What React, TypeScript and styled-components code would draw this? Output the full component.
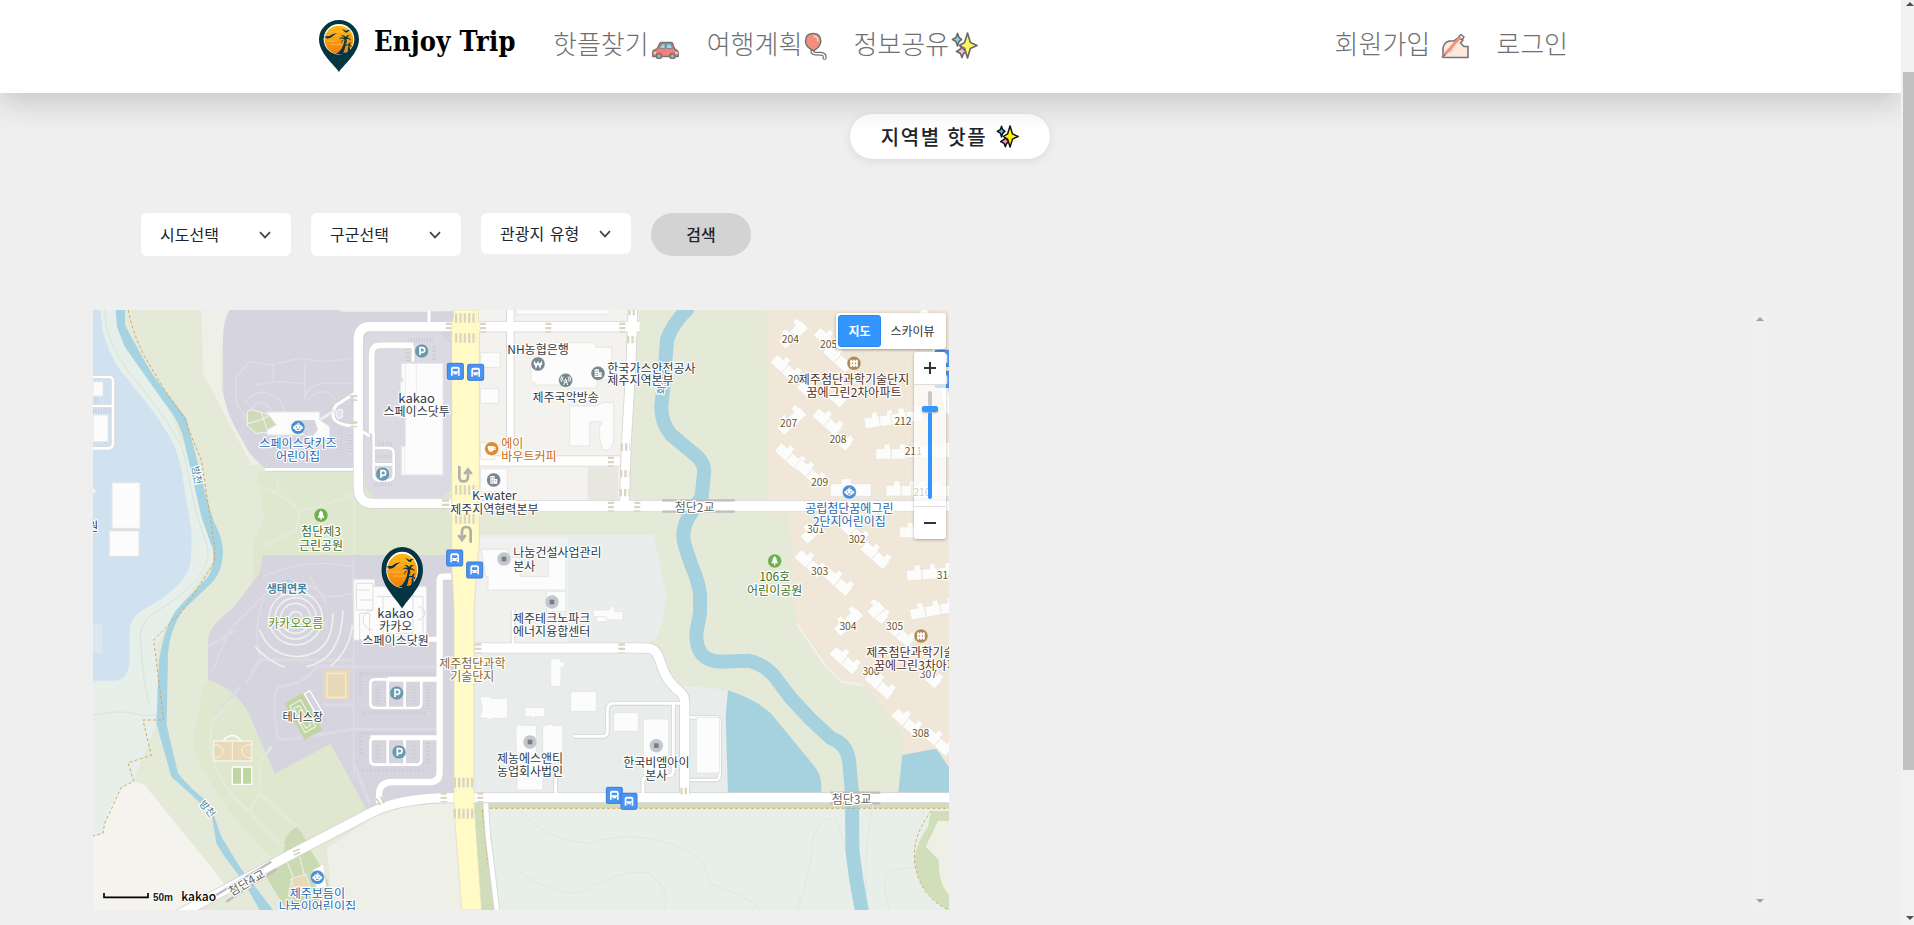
import React from "react";
import styled, { createGlobalStyle } from "styled-components";

const KR = `"Noto Sans CJK KR", "Noto Sans", sans-serif`;

const GlobalStyle = createGlobalStyle`
  *, *::before, *::after { box-sizing: border-box; }
  html, body { margin: 0; height: 100%; overflow: hidden; }
  body { background: #efefef; color: #212529; font-family: ${KR}; font-size: 16px; }
  a { color: inherit; text-decoration: none; }
  svg { display: block; }
`;

const Shell = styled.div`
  display: flex;
  width: 100vw;
  height: 100vh;
  min-height: 925px;
  overflow: hidden;
`;

const Page = styled.div`
  flex: 1;
  min-width: 0;
  display: flex;
  flex-direction: column;
  overflow: hidden;
`;

const Header = styled.header`
  position: relative;
  z-index: 2;
  display: flex;
  align-items: flex-start;
  height: 93px;
  flex: none;
  padding: 0 333px 0 319px;
  background: #fff;
  box-shadow: 0 10px 28px rgba(0, 0, 0, 0.17);
`;

const Brand = styled.a`
  display: flex;
  align-items: flex-start;
  width: 234px;
  color: #000;
  padding-top: 20px;
`;

const BrandName = styled.span`
  margin: 4px 0 0 15px;
  font: bold 27px/36px "DejaVu Serif Condensed", "DejaVu Serif", serif;
  font-stretch: condensed;
  letter-spacing: 0.3px;
  white-space: nowrap;
`;

const Nav = styled.nav<{ $end?: boolean }>`
  display: flex;
  margin-left: ${(p) => (p.$end ? "auto" : 0)};
  padding-top: 26px;
  color: #6f6f6f;
  font-size: 26px;
  font-weight: 300;
  line-height: 34px;
`;

const NavLink = styled.a<{ $gap: number; $space?: number }>`
  display: flex;
  margin-right: ${(p) => p.$gap}px;
  white-space: nowrap;

  svg {
    margin: 6px 0 0 ${(p) => p.$space ?? 3}px;
    opacity: 0.62;
  }
`;

const TitlePill = styled.h1`
  display: flex;
  align-items: center;
  justify-content: center;
  gap: 9px;
  width: 200px;
  height: 45px;
  margin: 21px 0 0 850px;
  border-radius: 23px;
  background: #fff;
  box-shadow: 0 2px 10px rgba(0, 0, 0, 0.09);
  font-size: 20px;
  font-weight: 500;
  letter-spacing: 1.7px;
  white-space: nowrap;
`;

const Filters = styled.form`
  display: flex;
  align-items: flex-start;
  gap: 20px;
  margin: 54px 0 0 141px;
`;

const Select = styled.button<{ $height: number }>`
  display: flex;
  align-items: center;
  justify-content: space-between;
  width: 150px;
  height: ${(p) => p.$height}px;
  padding: 0 20px 2px 19px;
  border: 0;
  border-radius: 6px;
  background: #fff;
  color: #212529;
  font: 16px ${KR};
  word-spacing: 2px;
  white-space: nowrap;

  svg {
    margin-top: 2px;
  }
`;

const SearchButton = styled.button`
  width: 100px;
  height: 43px;
  padding: 0 0 2px;
  border: 0;
  border-radius: 22px;
  background: #d3d3d3;
  color: #212529;
  font: 500 16px ${KR};
`;

const Results = styled.main`
  display: flex;
  justify-content: space-between;
  margin: 54px 133px 0 93px;
`;

const MapBox = styled.section`
  position: relative;
  width: 856px;
  height: 600px;
  overflow: hidden;
  background: #e4e9d8;
`;

const MapTypes = styled.div`
  position: absolute;
  top: 3px;
  right: 3px;
  display: flex;
  width: 110px;
  height: 36px;
  padding: 2px;
  border-radius: 3px;
  background: #fff;
  box-shadow: 0 1px 3px rgba(0, 0, 0, 0.35);
`;

const MapType = styled.button<{ $active?: boolean }>`
  flex: ${(p) => (p.$active ? "0 0 43px" : "1")};
  padding: 0 0 1px;
  border: ${(p) => (p.$active ? "1px solid #2a86ea" : "0")};
  border-radius: 3px;
  background: ${(p) => (p.$active ? "#3396ff" : "#fff")};
  color: ${(p) => (p.$active ? "#fff" : "#333")};
  font: ${(p) => (p.$active ? 700 : 400)} 12px ${KR};
`;

const ZoomControl = styled.div`
  position: absolute;
  top: 42px;
  right: 3px;
  display: flex;
  flex-direction: column;
  width: 32px;
  height: 187px;
  border-radius: 3px;
  box-shadow: 0 1px 3px rgba(0, 0, 0, 0.3);
  overflow: hidden;
`;

const ZoomButton = styled.button`
  display: flex;
  align-items: center;
  justify-content: center;
  height: 32px;
  flex: none;
  padding: 0;
  border: 0;
  background: #fff;
`;

const ZoomTrack = styled.div`
  flex: 1;
  display: flex;
  flex-direction: column;
  align-items: center;
  padding: 6px 0 7px;
  border: solid #ddd;
  border-width: 1px 0;
  background: rgba(255, 255, 255, 0.7);
`;

const TrackPart = styled.div<{ $on?: boolean }>`
  width: 4px;
  height: ${(p) => (p.$on ? "auto" : "15px")};
  flex: ${(p) => (p.$on ? "1" : "none")};
  border-radius: 2px;
  background: ${(p) => (p.$on ? "#3396ff" : "#c8c8c8")};
`;

const TrackHandle = styled.div`
  width: 16px;
  height: 6px;
  flex: none;
  border-radius: 2px;
  background: #3396ff;
  box-shadow: 0 1px 2px rgba(0, 0, 0, 0.3);
`;

const ScrollRail = styled.div<{ $page?: boolean }>`
  display: flex;
  flex-direction: column;
  align-items: flex-end;
  justify-content: space-between;
  flex: none;
  width: ${(p) => (p.$page ? 13 : 17)}px;
  padding: ${(p) => (p.$page ? "2px 0 5px" : "7px 4px")};
  background: ${(p) => (p.$page ? "#f1f1f1" : "#f0f0f0")};
`;

const ScrollThumb = styled.div`
  width: 11px;
  height: 698px;
  margin: 66px 0 auto;
  background: #c1c1c1;
`;

const Arrow = ({ down, color }: { down?: boolean; color: string }) => (
  <svg width="8" height="4" viewBox="0 0 8 4">
    <path d={down ? "M0 0H8L4 4z" : "M0 4H8L4 0z"} fill={color} />
  </svg>
);

const Chevron = () => (
  <svg width="12" height="8" viewBox="0 0 12 8" fill="none" stroke="#444" strokeWidth="1.7">
    <path d="M1 1.2 6 6.4 11 1.2" />
  </svg>
);

const PinIcon = ({ width, height }: { width: number; height: number }) => (
  <svg width={width} height={height} viewBox="0 0 120 157" preserveAspectRatio="none">
    <PinArt />
  </svg>
);

const PinArt = () => (
  <>
    <defs>
      <linearGradient id="dusk" x1="0" y1="0" x2="0" y2="1">
        <stop offset="0" stopColor="#fdb913" />
        <stop offset="0.5" stopColor="#fb9c12" />
        <stop offset="1" stopColor="#f47b0c" />
      </linearGradient>
    </defs>
    <path d="M60 157C48 137 0 101 0 58A60 58 0 0 1 120 58C120 101 72 137 60 157Z" fill="#043642" />
    <circle cx="60" cy="58" r="46" fill="#fff" />
    <circle cx="60" cy="60" r="43" fill="url(#dusk)" />
    <path d="M32 36H98M24 46H80M34 74H70M24 64H54" stroke="#ffcf6b" strokeWidth="2" opacity="0.7" />
    <path d="M12 51q12-3 19-3q11-8 24-9q-11 6-17 12q-8 6-17 4q4-3-9-4zM68 28q8 1 12 5q6-4 14-2q-8 2-9 7q-9 0-10-4q-3-4-7-6z" fill="#043642" />
    <path d="M51 101q20-6 26-42l4 1q-1 24-8 39l12-1q4-11 2-18l4-1q4 10 2 19q-9 12-42 3z" fill="#043642" />
    <path d="M77 59q-9-7-17 0q5-11 16-5q-4-7-11-6q10-5 15 3q5-8 14-4q-7 1-10 7q10-1 12 8q-7-6-14-4q4 8-1 13q0-9-5-12q-7 3-9 12q-3-10 10-12zM89 77q-8-3-13 4q1-10 12-7q2-8 10-6q-5 2-6 7q7 2 6 9q-4-6-8-5z" fill="#043642" />
  </>
);

const Sparkles = ({ size }: { size: number }) => (
  <svg width={size} height={size} viewBox="0 0 27 27" stroke="#111" strokeWidth="1.7" strokeLinejoin="round">
    <path d="M5 5.500 6.500 1.500 8 5.500 10.500 7.500 8 9.500 6.500 14 5 9.500 1.500 7.500z" fill="#35c5f0" />
    <path d="M9.500 17 11 14 12.500 17 15.500 19.500 12.500 21.500 11 25.500 9.500 21.500 5.500 19.500z" fill="#f692c0" />
    <path d="M13.600 10.500 16.500 1 19.400 10.500 26 13.500 19.400 16.500 16.500 26 13.600 16.500 8.500 13.500z" fill="#fff100" />
  </svg>
);

const Car = () => (
  <svg width="27" height="27" viewBox="0 0 27 27" strokeLinejoin="round">
    <g transform="translate(0 2)">
      <path d="M5 15 8 9.200Q8.500 8.400 9.500 8.400H19Q20 8.400 20.500 9.200L22.500 15 25 16.500Q26.300 17.500 26.200 19V22.500H.8V18Q1 16 5 15Z" fill="#e8352b" stroke="#222" strokeWidth="1.500" />
      <path d="M7.500 14.500 9.800 10H13V14.500zM14.500 10H18.600L20.500 14.500H14.500z" fill="#42cdf4" stroke="#222" strokeWidth=".7" />
      <path d="M1.500 19H4M23 19H26" stroke="#ffd34d" strokeWidth="1.500" />
      <circle cx="7" cy="22" r="2.600" fill="#777" stroke="#222" strokeWidth="1.500" />
      <circle cx="20.500" cy="22" r="2.600" fill="#777" stroke="#222" strokeWidth="1.500" />
    </g>
  </svg>
);

const Balloon = () => (
  <svg width="23" height="28" viewBox="0 0 23 28" fill="none" strokeLinecap="round">
    <path d="M9 17.500Q7 21 11 21.500L17 21.800Q21.500 22 20.500 26" stroke="#222" strokeWidth="4" />
    <path d="M9 17.500Q7 21 11 21.500L17 21.800Q21.500 22 20.500 26.500" stroke="#fff" strokeWidth="1.500" />
    <path d="M9 1.500Q16.500 1.500 16.800 9Q16.500 15 9.500 18.800Q1.500 15 1.500 9Q1.800 1.500 9 1.500Z" fill="#f04a32" stroke="#222" strokeWidth="1.500" />
    <path d="M10 4Q14 4.500 14 9" stroke="#ffb3a2" strokeWidth="1.500" />
  </svg>
);

const WritingHand = () => (
  <svg width="28" height="27" viewBox="0 0 28 27" strokeLinejoin="round">
    <path d="M2 25.500V19Q1.500 14 5 10.500L8 9H13L17 6 22 8 19.500 11 23 14.500H27V25.500Z" fill="#fbdccb" stroke="#222" strokeWidth="1.600" />
    <path d="M6 17H14L9 21z" fill="#cfae90" />
    <path d="M1.500 25 19.500 5" stroke="#f04a32" strokeWidth="2.800" />
    <path d="M1 25.500 4 22.500M17.500 5 20 2.500 23 5 20.500 8" fill="none" stroke="#222" strokeWidth="1.600" />
  </svg>
);

/* The map canvas uses three units per pixel. */
type LabelProps = { x: number; y: number; t: string; c?: string; s?: number; a?: "start" | "middle"; w?: number; r?: number };

const Label = ({ x, y, t, c = "#2f3a45", s = 36, a = "middle", w = 400, r = 0 }: LabelProps) => (
  <text
    x={x}
    y={y + s * 0.36 + 2}
    fill={c}
    fontSize={s}
    fontWeight={w}
    textAnchor={a}
    stroke="#fff"
    strokeWidth="7"
    strokeLinejoin="round"
    paintOrder="stroke"
    transform={r ? `rotate(${r} ${x} ${y})` : undefined}
  >
    {t}
  </text>
);

const BLUE = "#1f68b3";
const GREEN = "#38701f";
const BROWN = "#4f3024";
const OLIVE = "#6b5426";
const ORANGE = "#c96a0c";

const labels: LabelProps[] = [
  { x: 971, y: 262, t: "kakao", s: 39 },
  { x: 971, y: 303, t: "스페이스닷투" },
  { x: 615, y: 398, t: "스페이스닷키즈", c: BLUE },
  { x: 615, y: 438, t: "어린이집", c: BLUE },
  { x: 684, y: 663, t: "첨단제3", c: GREEN },
  { x: 684, y: 704, t: "근린공원", c: GREEN },
  { x: 582, y: 836, t: "생태연못", c: "#3b84a4", s: 33, w: 700 },
  { x: 314, y: 495, t: "방천", c: "#3b7f99", s: 30, r: 80 },
  { x: 345, y: 1495, t: "방천", c: "#3b7f99", s: 30, r: 50 },
  { x: -17, y: 647, t: "원", a: "start" },
  { x: 1204, y: 555, t: "K-water", s: 37 },
  { x: 1204, y: 597, t: "제주지역협력본부" },
  { x: 1225, y: 398, t: "에이", c: ORANGE, a: "start" },
  { x: 1225, y: 437, t: "바우트커피", c: ORANGE, a: "start" },
  { x: 1335, y: 116, t: "NH농협은행" },
  { x: 1704, y: 226, t: "화천", c: "#3b84a4", s: 30, r: -85 },
  { x: 1543, y: 173, t: "한국가스안전공사", a: "start" },
  { x: 1543, y: 211, t: "제주지역본부", a: "start" },
  { x: 1418, y: 260, t: "제주국악방송" },
  { x: 1805, y: 590, t: "첨단2교", c: "#666" },
  { x: 2092, y: 85, t: "204", c: OLIVE, s: 31 },
  { x: 2207, y: 101, t: "205", c: OLIVE, s: 31 },
  { x: 2110, y: 207, t: "206", c: OLIVE, s: 31 },
  { x: 2087, y: 337, t: "207", c: OLIVE, s: 31 },
  { x: 2235, y: 385, t: "208", c: OLIVE, s: 31 },
  { x: 2180, y: 516, t: "209", c: OLIVE, s: 31 },
  { x: 2430, y: 331, t: "212", c: OLIVE, s: 31 },
  { x: 2461, y: 423, t: "211", c: OLIVE, s: 31 },
  { x: 2487, y: 546, t: "210", c: OLIVE, s: 31 },
  { x: 2168, y: 657, t: "301", c: OLIVE, s: 31 },
  { x: 2292, y: 686, t: "302", c: OLIVE, s: 31 },
  { x: 2180, y: 781, t: "303", c: OLIVE, s: 31 },
  { x: 2557, y: 795, t: "314", c: OLIVE, s: 31 },
  { x: 2265, y: 946, t: "304", c: OLIVE, s: 31 },
  { x: 2405, y: 948, t: "305", c: OLIVE, s: 31 },
  { x: 2334, y: 1083, t: "306", c: OLIVE, s: 31 },
  { x: 2506, y: 1090, t: "307", c: OLIVE, s: 31 },
  { x: 2483, y: 1269, t: "308", c: OLIVE, s: 31 },
  { x: 2283, y: 208, t: "제주첨단과학기술단지", c: BROWN },
  { x: 2283, y: 246, t: "꿈에그린2차아파트", c: BROWN },
  { x: 2320, y: 1025, t: "제주첨단과학기술단지", c: BROWN, a: "start" },
  { x: 2343, y: 1065, t: "꿈에그린3차아파트", c: BROWN, a: "start" },
  { x: 2269, y: 593, t: "공립첨단꿈에그린", c: BLUE },
  { x: 2269, y: 633, t: "2단지어린이집", c: BLUE },
  { x: 2045, y: 799, t: "106호", c: GREEN },
  { x: 2045, y: 839, t: "어린이공원", c: GREEN },
  { x: 1261, y: 727, t: "나눔건설사업관리", a: "start" },
  { x: 1261, y: 767, t: "본사", a: "start" },
  { x: 908, y: 908, t: "kakao", s: 39 },
  { x: 908, y: 948, t: "카카오" },
  { x: 908, y: 989, t: "스페이스닷원" },
  { x: 608, y: 938, t: "카카오오름", c: "#5b8f1c" },
  { x: 629, y: 1219, t: "테니스장", s: 33 },
  { x: 1138, y: 1059, t: "제주첨단과학", c: "#8b6a2c" },
  { x: 1138, y: 1098, t: "기술단지", c: "#8b6a2c" },
  { x: 1376, y: 923, t: "제주테크노파크" },
  { x: 1376, y: 963, t: "에너지융합센터" },
  { x: 1311, y: 1343, t: "제농에스앤티" },
  { x: 1311, y: 1382, t: "농업회사법인" },
  { x: 1690, y: 1355, t: "한국비엠아이" },
  { x: 1690, y: 1394, t: "본사" },
  { x: 2276, y: 1467, t: "첨단3교", c: "#666" },
  { x: 460, y: 1716, t: "첨단4교", c: "#666", r: -30 },
  { x: 673, y: 1750, t: "제주보듬이", c: BLUE },
  { x: 673, y: 1788, t: "나눔이어린이집", c: BLUE },
];

type PoiKind = "kid" | "parking" | "tree" | "cafe" | "office" | "bank" | "radio" | "apt" | "dot";

const poiColor: Record<PoiKind, string> = {
  kid: "#4a8fd6",
  parking: "#6a99ae",
  tree: "#6fb04e",
  cafe: "#e08b30",
  office: "#76868f",
  bank: "#76868f",
  radio: "#76868f",
  apt: "#ae8a56",
  dot: "#c4c8cd",
};

const poiArt: Record<PoiKind, React.ReactNode> = {
  kid: (
    <>
      <path d="M-3-9Q0-14 4-12" fill="none" stroke="#fff" strokeWidth="3" />
      <ellipse cx="0" cy="1" rx="11" ry="10" fill="#fff" />
      <circle cx="-11" cy="1" r="4" fill="#fff" />
      <circle cx="11" cy="1" r="4" fill="#fff" />
      <path d="M-5-3v4M5-3v4M-4 6h8" fill="none" stroke="#4a8fd6" strokeWidth="3" />
    </>
  ),
  parking: <path d="M-5 12V-10H2a7 7 0 0 1 0 14H-5" fill="none" stroke="#fff" strokeWidth="5" />,
  tree: <path d="M0-15 6-7V-3L10 7H2V13H-2V7H-10L-6-3V-7z" fill="#fff" />,
  cafe: <path d="M-12-8H7V-5H12V4H6Q3 10-3 10Q-12 9-12-8M7-2V2H9V-2z" fill="#fff" fillRule="evenodd" />,
  office: (
    <>
      <path d="M-10-12H3V-3H11V11H-10z" fill="#fff" />
      <path d="M-6-8v3M-1-8v3M-6-1v3M-1-1v3M-6 5v3M-1 5v3M6 1v3" stroke="#76868f" strokeWidth="3" />
    </>
  ),
  bank: <path d="M-11-8-6 9 0-5 6 9 11-8M-13 0H13" fill="none" stroke="#fff" strokeWidth="4" />,
  radio: <path d="M-6 14 0-5 6 14M-4 6H4M-7-11q-6 7 0 13M7-11q6 7 0 13M-12-12q-6 9 0 17M12-12q6 9 0 17" fill="none" stroke="#fff" strokeWidth="3" />,
  apt: <path d="M-8-11V11M0-11V11M8-11V11M-12-5H12M-12 5H12" stroke="#fff" strokeWidth="5" />,
  dot: <rect x="-7" y="-7" width="14" height="14" fill="#74818a" />,
};

const pois: [PoiKind, number, number][] = [
  ["kid", 615, 352], ["kid", 2269, 546], ["kid", 673, 1702],
  ["parking", 986, 123], ["parking", 869, 492], ["parking", 911, 1149], ["parking", 918, 1326],
  ["tree", 684, 616], ["tree", 2045, 753],
  ["cafe", 1196, 416], ["office", 1202, 510], ["office", 1515, 190], ["bank", 1335, 162], ["radio", 1418, 211],
  ["apt", 2283, 160], ["apt", 2484, 978],
  ["dot", 1233, 747], ["dot", 1377, 876], ["dot", 1311, 1296], ["dot", 1690, 1307],
];

const busStops = [[1087, 184], [1148, 187], [1085, 744], [1145, 780], [1564, 1456], [1608, 1474], [2550, 145], [2550, 208]];

/* Apartment blocks: x, y, angle, number of wings. */
const blocks: [number, number, number, number][] = [
  [2100, 73, -42, 2], [2190, 78, 42, 1], [2235, 145, 42, 2], [2078, 175, 42, 2], [2140, 235, 42, 1], [2235, 265, 42, 1],
  [2095, 332, -42, 2], [2203, 335, 42, 2], [2252, 395, 42, 1], [2090, 440, 42, 2], [2150, 488, 42, 2],
  [2360, 332, -8, 2], [2440, 320, -8, 2], [2395, 430, 0, 2], [2505, 425, 0, 3], [2425, 540, 0, 2], [2525, 540, 0, 3],
  [2165, 658, -42, 2], [2280, 665, 42, 2], [2347, 735, 42, 2], [2150, 760, 42, 2], [2235, 815, 42, 2],
  [2465, 665, 0, 2], [2510, 790, -4, 3], [2265, 935, -42, 2], [2360, 915, 42, 1], [2420, 970, 42, 2], [2348, 898, -42, 1],
  [2255, 1050, 42, 2], [2360, 1125, 42, 2], [2520, 1108, 42, 1], [2440, 1235, 42, 2], [2535, 1295, 42, 2], [2520, 900, -10, 3],
];

const buildings = [
  "M925 160H1050V495H925V410H937V325L880 312V300L923 300V215H930V205H925Z",
  "M1163 128H1222V172H1163ZM1163 236H1217V280H1163ZM1163 398H1205V448H1163ZM1163 476H1243V545H1163Z",
  "M57 518H141V655H57ZM49 663H138V739H49ZM0 215H30V258H0ZM0 315H45V395H0ZM0 530 9 545 0 552Z",
  "M520 306H680V330L710 350V385H640V375H522V360L550 345Z",
  "M1314 160 1390 98H1508V112H1556V210H1512V234H1420V225H1326V218H1314Z",
  "M1430 288H1508L1530 278H1562V395L1550 420H1530L1520 385V345H1525V335H1490V408H1430Z",
  "M1165 718H1245V742H1281V800H1366V710H1418V840H1185V800H1178Z",
  "M1360 845H1418V905H1360ZM1510 905H1550V935H1510Z",
  "M1543 900H1550V890H1565V905H1590V930H1540V920H1500V900Z",
  "M782 808H845V830H1000V1000H975V1010H960V990H782Z",
  "M1373 1046H1402V1055H1414V1072H1404V1129H1373ZM1433 1145H1510V1204H1433ZM1295 1193H1355V1220H1325V1225H1317V1220H1295Z",
  "M1160 1160H1190L1196 1165H1244V1225H1195L1190 1230L1180 1224H1160L1168 1195Z",
  "M1268 1247 1285 1242V1246H1330V1340H1350V1440H1272V1400ZM1349 1247 1380 1241V1247H1409V1342H1349Z",
  "M1562 1208H1636V1264H1562ZM1651 1227H1727V1395H1651ZM1810 1222H1880V1389H1810Z",
  "M2212 521H2245V506H2275V521H2335V559H2212Z",
  "M1271 -10H1545V13H1271Z",
];

const Block = ({ x, y, a, n }: { x: number; y: number; a: number; n: number }) => (
  <g transform={`translate(${x} ${y}) rotate(${a})`}>
    {Array.from({ length: n }, (_, i) => (
      <path key={i} d={`M${(i - n / 2) * 46}-14h24v-14h18v14h4v32h-46z`} />
    ))}
  </g>
);

const Crossing = ({ x, y, w, h, v }: { x: number; y: number; w: number; h: number; v?: boolean }) => (
  <path
    d={v ? `M${x + w / 2} ${y}V${y + h}` : `M${x} ${y}H${x + w}`}
    stroke="#dad5c2"
    strokeWidth={v ? w : h}
    strokeDasharray="7 6"
    fill="none"
  />
);

const roads: [string, number][] = [
  ["M1075 50H830Q796 50 796 90V530Q796 580 840 580H1075", 28],
  ["M515 478H780", 8],
  ["M1008 0V50", 9],
  ["M795 244 730 285Q712 310 725 330Q740 345 780 348L830 378", 9],
  ["M960 106H860Q836 106 836 135V370", 17],
  ["M960 106V155M836 370H842V495Q842 511 860 511H885Q902 511 902 495V430Q902 414 885 414H842M842 463H900", 8],
  ["M0 201H50Q60 201 60 215V400Q60 415 45 415H0M0 288H58", 8],
  ["M1115 50H1640", 29],
  ["M1252 0V440Q1255 452 1280 453H1580", 20],
  ["M1620 0 1613 180 1600 400 1594 588", 27],
  ["M1150 453H1580", 28],
  ["M1110 588H2568", 31],
  ["M2490 0 2515 50 2545 200 2568 310", 22],
  ["M1075 800H1050Q1040 800 1040 812V1385Q1040 1416 1010 1416H900Q858 1416 858 1455V1480", 19],
  ["M1000 988H1040M884 1108H1040M832 1283H1040", 15],
  ["M884 1108H845Q832 1108 832 1122V1180Q832 1194 848 1194H970Q985 1194 985 1178V1108M884 1108V1190M935 1108V1190", 8],
  ["M850 1283Q832 1283 832 1297V1350Q832 1364 848 1364H970Q985 1364 985 1348V1283M884 1283V1364M935 1283V1364", 8],
  ["M255 1815 600 1630 840 1505Q930 1463 1080 1463H2568", 28],
  ["M1145 1014H1655C1720 1014 1680 1080 1760 1145Q1775 1155 1775 1180V1463", 28],
  ["M1260 900V1014", 8],
  ["M1442 1279H1530Q1543 1279 1543 1262V1205Q1543 1180 1560 1180H1765M1741 1180V1380Q1741 1398 1725 1398H1670Q1650 1398 1650 1415V1463M1388 1380V1463", 9],
  ["M1790 1222H1870Q1880 1222 1880 1235V1395Q1880 1410 1867 1410H1790", 8],
  ["M1178 1480 1185 1580 1212 1800", 14],
];

const MapArt = () => (
  <svg width="856" height="600" viewBox="0 0 2568 1800" fontFamily={KR}>
    <rect width="2568" height="1800" fill="#e4e9d8" />

    {/* ground */}
    <path d="M0 0H75L100 90L220 280L300 480L370 740L250 900L190 1010L195 1230L110 1440L30 1570L0 1580Z" fill="#e6efe9" />
    <path d="M0 0H22Q25 100 85 185Q215 340 245 410Q265 460 270 510L295 660Q298 750 285 785Q250 845 150 900Q113 920 110 960V1050Q105 1112 65 1112H0Z" fill="#d0e2ef" />
    <path d="M0 942H28V1030H0Z" fill="#dbe8f1" />
    <path d="M35 0Q35 90 110 190Q260 370 275 440Q310 630 340 700Q355 740 330 780Q290 850 180 910Q130 950 145 1010Q150 1120 170 1185M0 1215Q80 1200 120 1210T190 1215" fill="none" stroke="#d9e3d8" strokeWidth="3" />
    <path d="M0 1577 30 1570Q40 1490 90 1430L120 1412L155 1425L370 1690L400 1730L290 1800H0Z" fill="#f4f3ee" />
    <path d="M325 0H410L385 120V240L430 350L500 465H475L330 190Z" fill="#eeefe6" />
    <path d="M410 0H735Q740 6 760 6H1000L1080 0V600H830L515 475L470 430L425 350Q390 280 390 230V90Q390 30 410 0Z" fill="#d6d4df" />
    <path d="M735-5H1080V4H750Z" fill="#eeefe6" />
    <path d="M490 485H1080V735H510L500 820L480 860V700L515 620Z" fill="#dfe8cf" />
    <path d="M510 735H1083V1463H950L820 1500L713 1302L545 1392L475 1230Q440 1140 345 1110V985Q355 940 415 900L500 790Z" fill="#d6d4df" />
    <path d="M345 1110Q440 1140 475 1230L545 1392L713 1302L820 1500L610 1610L530 1640Q390 1500 310 1340Q290 1300 320 1200Q325 1130 345 1110Z" fill="#dfe8cf" />
    <path d="M575 1620Q565 1580 610 1550Q630 1565 640 1600L690 1680Q720 1740 712 1800H580L520 1700Z" fill="#cadab2" />
    <path d="M1085 1470H920L700 1615Q710 1650 712 1800H1110Z" fill="#eeefe7" />
    <path d="M830 68H1040L1073 100V540L1050 562H845L815 530V85Z" fill="#dbdae3" />
    <path d="M1155-2H1640L1632 68L1594 570H1155Z" fill="#f3f2ee" />
    <path d="M1484 472H1576V570H1484Z" fill="#e7e7df" />
    <path d="M1155 674H1682L1720 850Q1715 930 1690 985L1655 1000H1150L1140 800Z" fill="#e9edec" />
    <path d="M1155 682H1425V1000H1145Z" fill="#f0f1ee" />
    <path d="M1143 1015H1660L1730 1120L1790 1130Q1850 1130 1905 1143L1898 1220L1905 1463H1143Z" fill="#e8edec" />
    <path d="M2020 0H2568V1375L2530 1318L2430 1335L2428 1270L2315 1123L2240 1110L2200 1050L2110 940L2100 850L2088 610H2025Z" fill="#f0e7d9" />
    <path d="M2110 940 2200 1070 2245 1115 2310 1125" fill="none" stroke="#f2f0e8" strokeWidth="7" />
    <path d="M1150 1480H2568V1800H1200L1145 1650Z" fill="#e7efe8" />
    <path d="M1145 1478H2568V1494H1190L1178 1500L1205 1800H1165L1143 1600Z" fill="#d1dcb9" />
    <path d="M1281 1500Q1350 1590 1490 1600Q1640 1550 1800 1630Q1840 1665 1850 1720Q1990 1770 2000 1800M1281 1688Q1370 1750 1460 1750Q1600 1670 1670 1690Q1740 1750 1710 1800M2110 1800Q2155 1700 2160 1580Q2190 1510 2230 1530Q2260 1600 2270 1690M2340 1480Q2310 1650 2320 1750M2390 1800Q2355 1700 2400 1680L2465 1672" fill="none" stroke="#dfe8df" strokeWidth="3" />
    <path d="M2515 1503H2568V1800Q2470 1750 2465 1640Q2475 1590 2505 1550Z" fill="#d0deba" />
    <path d="M2535 1533H2568V1755Q2535 1720 2537 1650L2498 1610Z" fill="#eef0e6" />

    {/* water */}
    <path d="M68 0H96V45Q140 130 180 195L280 325L312 450Q340 570 365 640Q392 690 390 735Q385 790 355 820L270 900Q230 960 225 1030L221 1245L255 1390Q295 1440 350 1480L385 1580L440 1670L540 1800H500L455 1720L395 1640L370 1600L355 1510L290 1450L235 1400L190 1240L198 1050Q215 950 250 900L345 800Q365 770 360 720L325 620L275 400Q265 340 215 280L95 110L72 50Z" fill="#a6d3e1" />
    <path d="M1790-10Q1735 45 1722 90L1714 200L1705 290Q1705 340 1735 375L1795 425Q1838 455 1833 490L1826 560L1782 630Q1765 665 1775 705L1795 765Q1815 810 1821 850V910L1810 970Q1808 1055 1885 1055L1965 1052Q2010 1060 2045 1100L2090 1160L2150 1225L2215 1285Q2260 1300 2268 1350L2277 1450L2278 1620L2290 1710L2308 1810" fill="none" stroke="#a6d2df" strokeWidth="42" strokeLinejoin="round" />
    <path d="M1905 1141Q2010 1175 2050 1230L2165 1370Q2190 1400 2184 1448H1905L1898 1220Z" fill="#a6d2df" />
    <path d="M2428 1335 2530 1316 2568 1372V1448H2416Z" fill="#a6d2df" />
    <path d="M106 0Q115 60 155 140L215 240L275 325L300 390L325 450L365 710V755L275 895L182 990L212 1230H150L175 1336L105 1358L122 1414L85 1432L35 1540L30 1570L0 1578M1190 1495H2568M1168 1500 1185 1665M2515 1503Q2440 1600 2475 1700Q2500 1770 2568 1800" fill="none" stroke="#d4a860" strokeWidth="3" strokeDasharray="9 7" />

    {/* garden paths and sports courts */}
    <g fill="none" stroke="#dfdee6" strokeWidth="4">
      <path d="M430 280V200L470 155L530 165L620 145L700 155L780 145M540 160V215L485 225M540 215L640 220M635 160V270Q640 215 720 220H780M430 280L470 340M455 280Q490 220 560 270L590 330M470 300Q510 250 540 310M640 275Q690 220 725 265M740 370V440M770 370V440" />
      <path d="M510 800Q640 740 780 770V870M540 840Q620 790 700 860Q740 860 780 850M600 810V860H740M650 800L700 880M510 870Q480 960 500 1040M782 740V1400M360 1080L410 960L520 850" />
      <path stroke="#dcdbe4" strokeWidth="9" d="M345 1010 430 960M460 1120 500 1050H780M440 1130 360 1230M555 1290Q530 1140 560 1130Q640 1120 670 1070H1030M555 1290 640 1280 780 1258H1030M690 1185H780M782 1360 830 1480" />
      <path stroke="#e3ead9" strokeWidth="8" d="M420 1165 360 1230Q320 1380 475 1510Q520 1570 575 1610M500 1440V1360L535 1310M470 1500 500 1450L610 1550M490 530Q560 540 620 600Q700 590 780 550M555 500V545M620 600 610 660 510 710M784 500V730" />
    </g>
    <g fill="none" stroke="#f0f0ee" strokeWidth="5">
      <circle cx="608" cy="925" r="20" />
      <circle cx="608" cy="925" r="45" />
      <circle cx="608" cy="925" r="62" />
      <circle cx="608" cy="925" r="80" />
      <path d="M500 960Q530 1040 620 1040Q720 1030 720 910M487 1010Q520 1050 575 1072M640 1070Q745 1050 750 900M712 1070Q770 1020 778 945" />
    </g>
    <path d="M463 305 475 299 530 315 578 343 570 362 490 370 463 348Z" fill="#cfdbb8" stroke="#f5f5f2" strokeWidth="3" />
    <path d="M465 340Q510 330 530 315M505 310L525 365" stroke="#e9eddf" strokeWidth="4" fill="none" />
    <path d="M570 815Q590 800 610 825Q595 840 570 850Z" fill="#a9d5e5" />
    <path d="M690 1080H770V1170H690Z" fill="#e8d9b8" />
    <path d="M702 1090H758V1162H702Z" fill="none" stroke="#f6efdf" strokeWidth="3" />
    <path d="M574 1180 630 1148 688 1260 635 1289Z" fill="#bfd5a2" />
    <path d="M590 1188 623 1170 668 1250 636 1268ZM602 1196 619 1187 653 1245 639 1254Z" fill="none" stroke="#e9f0dc" strokeWidth="4" />
    <path d="M634 1152 650 1142 688 1205 670 1213Z" fill="none" stroke="#fff" strokeWidth="4" />
    <path d="M390 1293Q418 1260 446 1293" fill="none" stroke="#fff" strokeWidth="4" />
    <path d="M362 1293H476V1353H362Z" fill="#e8d9b8" stroke="#f6f3ea" strokeWidth="4" />
    <path d="M418 1293V1353M364 1304Q390 1305 390 1323T364 1344M474 1304Q446 1305 446 1323T474 1344" fill="none" stroke="#faf4e7" strokeWidth="3" />
    <path d="M418 1371H476V1423H418Z" fill="#bfd5a2" stroke="#fff" strokeWidth="4" />
    <path d="M447 1371V1423" stroke="#fff" strokeWidth="6" />
    <path d="M592 1708 640 1692 655 1750H610Z" fill="#e8d9b8" stroke="#f6efdf" strokeWidth="3" />
    <path d="M580 1650 600 1700 585 1760M620 1640 635 1700" stroke="#e9eddf" strokeWidth="4" fill="none" />
    <path d="M660 1680 690 1664 700 1730 670 1735Z" fill="#fdfdfd" />

    {/* parking bays */}
    <g fill="none" stroke="#c5c4cc" strokeWidth="12" strokeDasharray="2 6">
      <path d="M947 90H1020M1023 108V155M945 110V155M855 402H902M845 524H902M850 440H895M740 362V440M770 375V430M805 1092H1025M803 1090V1155M810 1208H1000M1004 1130V1195M808 1270H1025M803 1270V1335M806 1381H995M1004 1300V1362M855 1130V1180M910 1130V1180M962 1130V1180M855 1305V1350M910 1305V1350M962 1305V1350M5 270H15M35 350V402M0 304H50" />
    </g>

    {/* roads */}
    <g fill="none" stroke="#d5d5d7">
      {roads.map(([d, w]) => <path key={d} d={d} strokeWidth={w + 5} />)}
    </g>
    <g fill="none" stroke="#fff">
      {roads.map(([d, w]) => <path key={d} d={d} strokeWidth={w} />)}
    </g>
    <path d="M737 298Q722 310 735 326L748 322V300Z" fill="#e3e2e9" stroke="#fff" strokeWidth="3" />
    <path d="M680 330 728 300" stroke="#eeeef2" strokeWidth="9" />
    <path d="M1083 0 1076 80V760L1083 900V1500L1106 1800H1166L1143 1480V900L1152 770L1159 700V60L1155 0Z" fill="#fffac6" stroke="#dcd8c4" strokeWidth="2" />
    <path d="M1082 1448H1144V1479H1082ZM1076 36H1160V66H1076Z" fill="#fffac6" />
    <g>
      {[24, 84, 540, 627].map((y) => <Crossing key={y} x={1086} y={y} w={66} h={29} />)}
      {[1418, 1511].map((y) => <Crossing key={y} x={1082} y={y} w={60} h={29} />)}
      <Crossing x={1058} y={38} w={18} h={30} v />
      <Crossing x={1161} y={38} w={18} h={30} v />
      <Crossing x={1357} y={38} w={18} h={30} v />
      <Crossing x={1579} y={38} w={18} h={30} v />
      <Crossing x={1545} y={440} w={18} h={30} v />
      <Crossing x={1545} y={575} w={18} h={30} v />
      <Crossing x={1624} y={575} w={18} h={30} v />
      <Crossing x={1047} y={568} w={22} h={28} v />
      <Crossing x={1145} y={1000} w={20} h={28} v />
      <Crossing x={1576} y={1000} w={20} h={28} v />
      <Crossing x={1043} y={1447} w={18} h={30} v />
      <Crossing x={1153} y={1447} w={18} h={30} v />
      <Crossing x={1606} y={5} w={28} h={22} />
      <Crossing x={1602} y={89} w={28} h={22} />
      <Crossing x={1583} y={411} w={28} h={22} />
      <Crossing x={1581} y={491} w={28} h={22} />
      <Crossing x={1580} y={548} w={28} h={22} />
      <Crossing x={1762} y={1443} w={28} h={20} />
      <Crossing x={771} y={255} w={22} h={18} v />
      <Crossing x={771} y={334} w={22} h={18} v />
    </g>
    <path d="M850 1465 862 1485M862 1460 874 1480M600 1625 620 1617M602 1635 622 1627" stroke="#d8d3bd" strokeWidth="5" />
    <path d="M1708 571H1925M1708 605H1925M2212 1448H2362M2212 1480H2362M370 1755 535 1655M400 1775 550 1678" stroke="#bdbdbd" strokeWidth="7" />
    <g fill="none" stroke="#b0afac" strokeWidth="8">
      <path d="M1099 468V500Q1099 514 1111 514Q1125 514 1125 500V484M1114 492 1125 478 1136 492M1133 698V665Q1133 651 1119 651Q1107 651 1107 665V684M1096 675 1107 690 1118 675" />
    </g>

    {/* buildings */}
    <g fill="#fcfcfc" stroke="#e6e6e5" strokeWidth="3">
      {buildings.map((d) => <path key={d} d={d} />)}
    </g>
    <path d="M937 162V325M970 162V300M925 410H935V495" stroke="#ececef" strokeWidth="3" fill="none" />
    <path d="M590 345 625 330H665L675 360 660 377H640Z" fill="#d6d4df" />
    <g fill="none" stroke="#dddde0" strokeWidth="3">
      <path d="M790 820H840V900H790ZM800 910H830V990H800ZM850 860H990V980H850M790 840H830M800 870H840M960 840V980M975 890A20 20 0 0 1 975 930M840 900A30 30 0 0 0 840 960M880 970H960M870 860V990" />
    </g>
    <g fill="#fcfcfa" stroke="#e6e2da" strokeWidth="2">
      {blocks.map(([x, y, a, n]) => <Block key={`${x}-${y}`} x={x} y={y} a={a} n={n} />)}
    </g>

    {/* markers and captions */}
    {busStops.map(([x, y]) => (
      <g key={`${x}-${y}`} transform={`translate(${x} ${y})`}>
        <rect x="-24" y="-24" width="48" height="48" rx="4" fill="#4893f3" stroke="#3b7cd6" strokeWidth="3" />
        <path d="M-13 13V-8Q-13-14-6-14H6Q13-14 13-8V13H8V9H-8V13ZM-8-8V0H8V-8ZM-9 4V7H-5V4ZM5 4V7H9V4Z" fill="#fff" fillRule="evenodd" />
      </g>
    ))}
    {pois.map(([k, x, y]) => (
      <g key={`${x}-${y}`} transform={`translate(${x} ${y})`}>
        <circle r="21" fill={poiColor[k]} stroke="#fff" strokeOpacity="0.6" strokeWidth="2" />
        {poiArt[k]}
      </g>
    ))}
    {labels.map((l) => <Label key={`${l.x}-${l.y}`} {...l} />)}
    <svg x="865" y="711" width="125" height="185" viewBox="0 0 120 157" preserveAspectRatio="none">
      <PinArt />
    </svg>
    <path d="M33 1749V1762H165V1749" fill="none" stroke="#000" strokeWidth="5" />
    <text x="180" y="1774" fontSize="30" fontWeight="700" fill="#222" fontFamily="Liberation Sans, sans-serif" stroke="#fff" strokeWidth="4" paintOrder="stroke">50m</text>
    <text x="265" y="1772" fontSize="36" fontWeight="500" fill="#000" stroke="#fff" strokeWidth="4" paintOrder="stroke">kakao</text>
  </svg>
);

export default function App() {
  return (
    <>
      <GlobalStyle />
      <Shell>
        <Page>
          <Header>
            <Brand href="#">
              <PinIcon width={40} height={52} />
              <BrandName>Enjoy Trip</BrandName>
            </Brand>
            <Nav>
              <NavLink href="#" $gap={28}>핫플찾기<Car /></NavLink>
              <NavLink href="#" $gap={26} $space={2}>여행계획<Balloon /></NavLink>
              <NavLink href="#" $gap={0} $space={2}>정보공유<Sparkles size={27} /></NavLink>
            </Nav>
            <Nav $end>
              <NavLink href="#" $gap={27} $space={11}>회원가입<WritingHand /></NavLink>
              <NavLink href="#" $gap={0}>로그인</NavLink>
            </Nav>
          </Header>
          <TitlePill>지역별 핫플<Sparkles size={23} /></TitlePill>
          <Filters onSubmit={(e) => e.preventDefault()}>
            <Select type="button" $height={43}>시도선택<Chevron /></Select>
            <Select type="button" $height={43}>구군선택<Chevron /></Select>
            <Select type="button" $height={41}>관광지 유형<Chevron /></Select>
            <SearchButton>검색</SearchButton>
          </Filters>
          <Results>
            <MapBox>
              <MapArt />
              <MapTypes>
                <MapType $active>지도</MapType>
                <MapType>스카이뷰</MapType>
              </MapTypes>
              <ZoomControl>
                <ZoomButton aria-label="확대">
                  <svg width="12" height="12" viewBox="0 0 12 12"><path d="M6 0V12M0 6H12" stroke="#333" strokeWidth="2" /></svg>
                </ZoomButton>
                <ZoomTrack>
                  <TrackPart />
                  <TrackHandle />
                  <TrackPart $on />
                </ZoomTrack>
                <ZoomButton aria-label="축소">
                  <svg width="12" height="12" viewBox="0 0 12 12"><path d="M0 6H12" stroke="#333" strokeWidth="2" /></svg>
                </ZoomButton>
              </ZoomControl>
            </MapBox>
            <ScrollRail>
              <Arrow color="#a3a3a3" />
              <Arrow down color="#a3a3a3" />
            </ScrollRail>
          </Results>
        </Page>
        <ScrollRail $page>
          <Arrow color="#505050" />
          <ScrollThumb />
          <Arrow down color="#505050" />
        </ScrollRail>
      </Shell>
    </>
  );
}
